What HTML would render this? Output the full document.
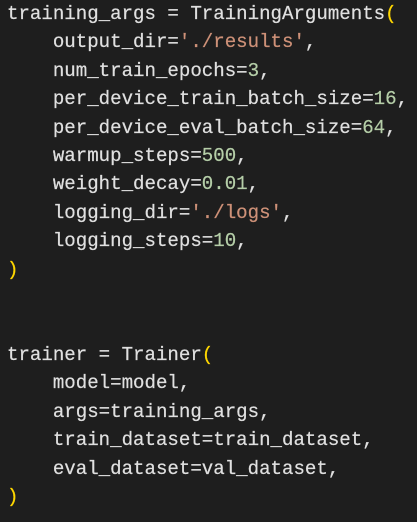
<!DOCTYPE html>
<html><head><style>
html,body{margin:0;padding:0;background:#1e1e1e;width:417px;height:522px;overflow:hidden}
pre{margin:0;padding:0 0 0 7px;font-family:"Liberation Mono",monospace;font-size:19.1px;line-height:28.4px;color:#e0e0e0;position:relative;top:0px;-webkit-text-stroke:0.2px currentColor}
.s{color:#ce9178}.n{color:#b5cea8}.p{color:#ffd700}
</style></head><body><pre>training_args = TrainingArguments<span class="p">(</span>
    output_dir=<span class="s">'./results'</span>,
    num_train_epochs=<span class="n">3</span>,
    per_device_train_batch_size=<span class="n">16</span>,
    per_device_eval_batch_size=<span class="n">64</span>,
    warmup_steps=<span class="n">500</span>,
    weight_decay=<span class="n">0.01</span>,
    logging_dir=<span class="s">'./logs'</span>,
    logging_steps=<span class="n">10</span>,
<span class="p">)</span>


trainer = Trainer<span class="p">(</span>
    model=model,
    args=training_args,
    train_dataset=train_dataset,
    eval_dataset=val_dataset,
<span class="p">)</span></pre></body></html>
